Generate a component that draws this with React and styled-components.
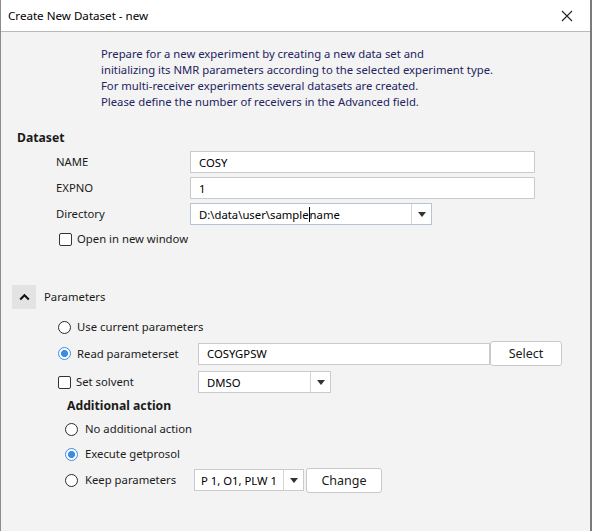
import React from "react";
import styled, { createGlobalStyle } from "styled-components";

const Global = createGlobalStyle`
  html, body { margin: 0; padding: 0; background: #2b2b8c; }
  body { font-family: "Noto Sans", "Open Sans", sans-serif; font-size: 11.3px; color: #1b1b1b; }
  * { box-sizing: border-box; }
`;

const Window = styled.div`
  width: 592px;
  height: 531px;
  display: flex;
  flex-direction: column;
  background: #f3f3f3;
  border-left: 1px solid #8c8c8c;
  border-right: 2px solid #7a7a7a;
`;

const TitleBar = styled.div`
  height: 32px;
  display: flex;
  align-items: center;
  justify-content: space-between;
  padding: 0 17px 0 7px;
  background: #ffffff;
  border-bottom: 1px solid #b9b9b9;
  font-size: 11.6px;
  color: #000;
`;

const Body = styled.div`
  flex: 1;
  padding: 14px 0 0 15px;
`;

const Intro = styled.p`
  margin: 0 0 20px 85px;
  line-height: 16px;
  color: #24245e;
`;

const SectionTitle = styled.div`
  font-weight: bold;
  font-size: 12.2px;
  line-height: 16px;
  color: #1b1b1b;
  margin-left: ${(p) => p.$indent || 0}px;
`;

const FormGrid = styled.div`
  display: grid;
  grid-template-columns: 134px 1fr;
  row-gap: 4px;
  align-items: center;
  margin: 5px 41px 0 40px;
`;

const Label = styled.span`
  line-height: 16px;
`;

const TextInput = styled.div`
  height: 22px;
  width: ${(p) => p.$w}px;
  display: flex;
  align-items: center;
  padding-left: 8px;
  background: #fff;
  border: 1px solid ${(p) => (p.$focus ? "#b7c3d6" : "#cbcbcb")};
  color: #000;
`;

const Combo = styled.div`
  height: ${(p) => p.$h || 22}px;
  width: ${(p) => p.$w}px;
  display: flex;
  background: #fff;
  border: 1px solid ${(p) => (p.$focus ? "#b7c3d6" : "#cbcbcb")};
  color: #000;
`;

const ComboText = styled.div`
  flex: 1;
  display: flex;
  align-items: center;
  padding-left: ${(p) => p.$pad || 8}px;
  white-space: nowrap;
`;

const Caret = styled.span`
  display: inline-block;
  width: 1px;
  height: 15px;
  background: #000;
`;

const ComboArrow = styled.div`
  width: 20px;
  display: flex;
  align-items: center;
  justify-content: center;
  border-left: 1px solid #d6d6d6;
  &::after {
    content: "";
    border-left: 4px solid transparent;
    border-right: 4px solid transparent;
    border-top: 5px solid #333;
  }
`;

const Row = styled.div`
  display: flex;
  align-items: center;
  height: ${(p) => p.$h || 22}px;
  margin-left: ${(p) => p.$indent || 0}px;
  margin-top: ${(p) => p.$mt || 0}px;
`;

const Option = styled.label`
  display: flex;
  align-items: center;
  gap: ${(p) => p.$gap || 6}px;
  width: ${(p) => p.$w || "auto"};
  line-height: 16px;
`;

const CheckBox = styled.span`
  width: 13px;
  height: 13px;
  border: 1px solid #333;
  border-radius: 2px;
  background: #fff;
  flex: none;
`;

const Radio = styled.span`
  width: 13px;
  height: 13px;
  border-radius: 50%;
  flex: none;
  border: ${(p) => (p.$on ? "1.5px solid #3a8de3" : "1.5px solid #2a2a2a")};
  background: ${(p) =>
    p.$on ? "radial-gradient(circle, #3a8de3 0 3.3px, #fff 3.8px)" : "#fff"};
`;

const Button = styled.button`
  height: ${(p) => p.$h || 25}px;
  width: ${(p) => p.$w}px;
  margin-left: ${(p) => p.$ml || 0}px;
  background: #fff;
  border: 1px solid #c9c9c9;
  border-radius: 3px;
  font: inherit;
  font-size: 12.5px;
  color: #1b1b1b;
  padding: 0;
`;

const ToggleButton = styled.span`
  width: 24px;
  height: 24px;
  display: flex;
  align-items: center;
  justify-content: center;
  background: #e3e3e3;
`;

const Close = () => (
  <svg width="12" height="12" viewBox="0 0 12 12">
    <path d="M1 1L11 11M11 1L1 11" stroke="#222" strokeWidth="1.1" />
  </svg>
);

export default function App() {
  return (
    <>
      <Global />
      <Window>
        <TitleBar>
          <span>Create New Dataset - new</span>
          <Close />
        </TitleBar>
        <Body>
          <Intro>
            Prepare for a new experiment by creating a new data set and
            <br />
            initializing its NMR parameters according to the selected experiment type.
            <br />
            For multi-receiver experiments several datasets are created.
            <br />
            Please define the number of receivers in the Advanced field.
          </Intro>

          <SectionTitle $indent={1}>Dataset</SectionTitle>
          <FormGrid>
            <Label>NAME</Label>
            <TextInput $w={345}>COSY</TextInput>
            <Label>EXPNO</Label>
            <TextInput $w={345}>1</TextInput>
            <Label>Directory</Label>
            <Combo $w={242} $focus>
              <ComboText>
                D:\data\user\sample<Caret />name
              </ComboText>
              <ComboArrow />
            </Combo>
          </FormGrid>
          <Row $indent={43} $mt={3} $h={22}>
            <Option $gap={5}>
              <CheckBox />
              Open in new window
            </Option>
          </Row>

          <Row $indent={-4} $mt={35} $h={24}>
            <Option $gap={8}>
              <ToggleButton>
                <svg width="11" height="8" viewBox="0 0 11 8">
                  <path d="M1.2 6.5L5.5 2.2L9.8 6.5" fill="none" stroke="#111" strokeWidth="2" />
                </svg>
              </ToggleButton>
              Parameters
            </Option>
          </Row>

          <Row $indent={42} $mt={7} $h={22}>
            <Option>
              <Radio />
              Use current parameters
            </Option>
          </Row>
          <Row $indent={42} $mt={3} $h={25}>
            <Option $w="140px">
              <Radio $on />
              Read parameterset
            </Option>
            <TextInput $w={292} $focus={false}>COSYGPSW</TextInput>
            <Button $w={72}>Select</Button>
          </Row>
          <Row $indent={42} $mt={5} $h={22}>
            <Option $w="140px" $gap={5}>
              <CheckBox />
              Set solvent
            </Option>
            <Combo $w={133}>
              <ComboText>DMSO</ComboText>
              <ComboArrow />
            </Combo>
          </Row>

          <Row $indent={51} $mt={1} $h={24}>
            <SectionTitle>Additional action</SectionTitle>
          </Row>
          <Row $indent={49} $mt={-1} $h={24}>
            <Option $gap={7}>
              <Radio />
              No additional action
            </Option>
          </Row>
          <Row $indent={49} $mt={1} $h={24}>
            <Option $gap={7}>
              <Radio $on />
              Execute getprosol
            </Option>
          </Row>
          <Row $indent={49} $mt={1} $h={26}>
            <Option $gap={7} $w="129px">
              <Radio />
              Keep parameters
            </Option>
            <Combo $w={110}>
              <ComboText $pad={6}>P 1, O1, PLW 1</ComboText>
              <ComboArrow />
            </Combo>
            <Button $w={76} $ml={2}>Change</Button>
          </Row>
        </Body>
      </Window>
    </>
  );
}
